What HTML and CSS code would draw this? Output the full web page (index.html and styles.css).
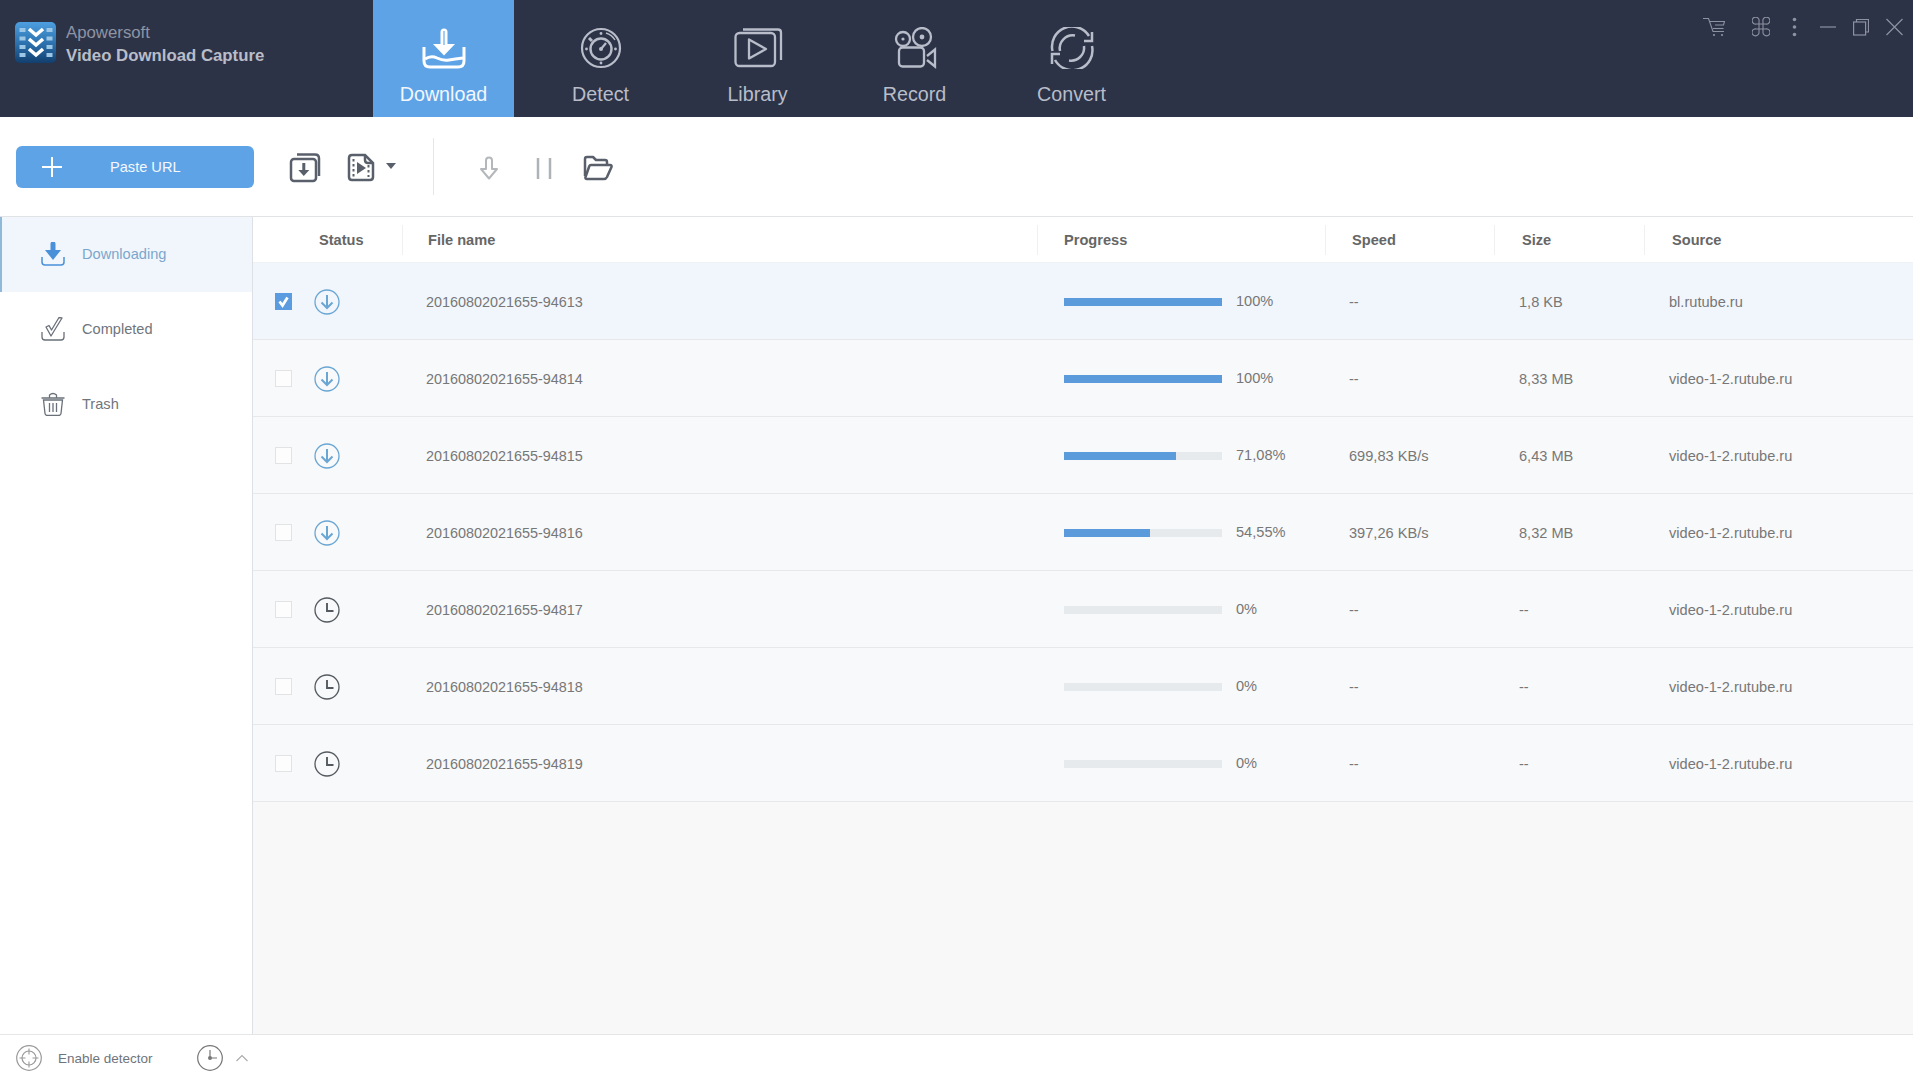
FILE: index.html
```html
<!DOCTYPE html>
<html lang="en">
<head>
<meta charset="utf-8">
<title>Apowersoft Video Download Capture</title>
<link rel="stylesheet" href="styles.css">
</head>
<body>
<div class="app">
  <header class="topbar">
    <div class="brand">
      <svg class="logo" viewBox="0 0 41 41" width="41" height="41">
        <defs><linearGradient id="lg" x1="0" y1="0" x2="0" y2="1"><stop offset="0" stop-color="#4e9fe0"/><stop offset="0.55" stop-color="#2a6fab"/><stop offset="1" stop-color="#123f6e"/></linearGradient></defs>
        <rect width="41" height="41" rx="5" fill="url(#lg)"/>
        <g fill="#9cc6e6"><rect x="4.5" y="6" width="6" height="4"/><rect x="4.5" y="14.5" width="6" height="4"/><rect x="4.5" y="23" width="6" height="4"/><rect x="4.5" y="31" width="6" height="4"/><rect x="31.5" y="6" width="6" height="4"/><rect x="31.5" y="14.5" width="6" height="4"/><rect x="31.5" y="23" width="6" height="4"/><rect x="31.5" y="31" width="6" height="4"/></g>
        <g fill="none" stroke="#fff" stroke-width="3.6"><path d="M14 7l7 6 7-6"/><path d="M14 17l7 6 7-6"/><path d="M14 27l7 6 7-6"/></g>
      </svg>
      <div class="brand-text">
        <div class="brand-vendor">Apowersoft</div>
        <div class="brand-name">Video Download Capture</div>
      </div>
    </div>
    <nav class="tabs">
      <div class="tab tab-active">
        <svg class="tab-icon" viewBox="0 0 50 42" width="50" height="42">
          <g transform="translate(3 0)">
          <path d="M18.5 17V5a3.5 3.5 0 0 1 7 0v12h7.5L22 28.5 11 17z" fill="#fff"/>
          <path d="M22 4v14" stroke="#8fbfee" stroke-width="1.6" fill="none"/>
          <path d="M2 20v14q0 6 6 6h28q6 0 6-6V20" fill="none" stroke="#fff" stroke-width="3"/>
          <path d="M3 32q6-4 12-1t12 2 14-2" fill="none" stroke="#fff" stroke-width="3"/>
          </g>
        </svg>
        <span class="tab-label">Download</span>
      </div>
      <div class="tab">
        <svg class="tab-icon" viewBox="0 0 50 42" width="50" height="42" fill="none" stroke="#b8bdc9">
          <circle cx="25" cy="21" r="19" stroke-width="2.2"/>
          <circle cx="25" cy="22" r="10.5" stroke-width="2.4"/>
          <path d="M25 22l5-6" stroke-width="2.2"/>
          <circle cx="25" cy="22" r="2" fill="#b8bdc9" stroke="none"/>
          <path d="M13 11l3 3" stroke-width="3"/>
          <path d="M30 6a16 16 0 0 1 9 7" stroke-width="1.4"/>
          <g fill="#b8bdc9" stroke="none"><circle cx="25" cy="6.5" r="1.4"/><circle cx="25" cy="36" r="1.4"/><circle cx="10.5" cy="22" r="1.4"/><circle cx="39.5" cy="22" r="1.4"/></g>
        </svg>
        <span class="tab-label">Detect</span>
      </div>
      <div class="tab">
        <svg class="tab-icon" viewBox="1 0 50 42" width="50" height="42" fill="none" stroke="#b8bdc9" stroke-width="2.3">
          <rect x="3.5" y="6" width="39.5" height="33" rx="4"/>
          <path d="M11 2.5h35q3 0 3 3V33"/>
          <path d="M17 12.5l17 9.5-17 9.500z" stroke-linejoin="round"/>
        </svg>
        <span class="tab-label">Library</span>
      </div>
      <div class="tab">
        <svg class="tab-icon" viewBox="0 0 50 42" width="50" height="42" fill="none" stroke="#b8bdc9" stroke-width="2.3">
          <circle cx="13" cy="12" r="7"/>
          <circle cx="32" cy="10" r="9"/>
          <circle cx="13" cy="12" r="1.6" fill="#b8bdc9" stroke="none"/>
          <circle cx="32" cy="10" r="2.4" fill="#b8bdc9" stroke="none"/>
          <rect x="9" y="20.5" width="25" height="19" rx="3.5"/>
          <path d="M37 29l8-6.500v17L37 33"/>
        </svg>
        <span class="tab-label">Record</span>
      </div>
      <div class="tab">
        <svg class="tab-icon" viewBox="0 0 50 42" width="50" height="42" fill="none" stroke="#b8bdc9" stroke-width="2.5">
          <path d="M5.5 24A20 20 0 0 1 42 9"/>
          <path d="M45 19A20 20 0 0 1 8 33"/>
          <path d="M45 5v9h-8"/>
          <path d="M5 37V27h8"/>
          <path d="M13 24A13 13 0 0 1 28 8.500"/>
          <path d="M37 19A13 13 0 0 1 22 33.500"/>
        </svg>
        <span class="tab-label">Convert</span>
      </div>
    </nav>
    <div class="controls">
      <svg viewBox="0 0 22 20" width="22" height="20" fill="none" stroke="#8d92a0" stroke-width="1.100"><path d="M0 1.500h5.500L10 14.500h11"/><path d="M7 4.500h14.500l-1 3.500H12"/><path d="M10 11.500h10.500"/><circle cx="11" cy="18" r="1.100" fill="#8d92a0" stroke="none"/><circle cx="19" cy="18" r="1.100" fill="#8d92a0" stroke="none"/></svg>
      <svg class="ctl-grid" viewBox="0 0 18 20" width="18" height="20" fill="none" stroke="#8d92a0" stroke-width="1.100"><path d="M7 7H4.500a3.500 3.500 0 1 1 2.500-2.500zM11 7h2.500A3.500 3.500 0 1 0 11 4.500zM7 12H4.500A3.500 3.500 0 1 0 7 15zM11 12h2.500A3.500 3.500 0 1 1 11 15zM7 7h4v5H7z"/></svg>
      <svg class="ctl-dots" viewBox="0 0 5 20" width="5" height="20" fill="#8d92a0"><circle cx="2.500" cy="2.500" r="1.800"/><circle cx="2.500" cy="10" r="1.800"/><circle cx="2.500" cy="17.500" r="1.800"/></svg>
      <svg class="ctl-min" viewBox="0 0 16 20" width="16" height="20" stroke="#8d92a0" stroke-width="1.200"><path d="M0 10h16"/></svg>
      <svg class="ctl-win" viewBox="0 0 16 20" width="16" height="20" fill="none" stroke="#8d92a0" stroke-width="1.200"><rect x="0.600" y="5" width="12" height="13"/><path d="M3.500 5V2.500h12V15h-3"/></svg>
      <svg class="ctl-win" viewBox="0 0 17 20" width="17" height="20" stroke="#8d92a0" stroke-width="1.200"><path d="M0.500 2l16 16M16.500 2l-16 16"/></svg>
    </div>
  </header>

  <section class="toolbar">
    <button class="paste"><svg viewBox="0 0 20 20" width="20" height="20" stroke="#fff" stroke-width="2"><path d="M10 0v20M0 10h20"/></svg><span class="paste-label">Paste URL</span></button>
    <svg class="t-import" viewBox="0 0 32 30" width="32" height="30" fill="none" stroke="#59606b" stroke-width="2.500"><rect x="2" y="6" width="25" height="22" rx="3"/><path d="M8 1.500h18q4 0 4 4V23"/><path d="M13.300 10v7h-4l5.500 6 5.500-6h-4v-7z" fill="#59606b" stroke="none"/></svg>
    <svg class="t-video" viewBox="0 0 28 29" width="28" height="29" fill="none" stroke="#59606b" stroke-width="2.500"><path d="M5 2h13l8 8v14q0 3-3 3H5q-3 0-3-3V5q0-3 3-3z"/><path d="M18 2v5q0 3 3 3h5"/><path d="M6.500 6v18M21.500 12v12" stroke-width="2" stroke-dasharray="2.500 2.500"/><path d="M10 9l9 6-9 6z" fill="#59606b" stroke="none"/></svg>
    <svg class="t-caret" viewBox="0 0 10 6" width="10" height="6"><path d="M0 0h10L5 6z" fill="#59606b"/></svg>
    <div class="t-divider"></div>
    <svg class="t-arrow" viewBox="0 0 20 24" width="20" height="24" fill="none" stroke="#b5b8bb" stroke-width="2"><path d="M7 13V4.500a3 3 0 0 1 6 0V13h5L10 22.500 2 13z" stroke-linejoin="round"/></svg>
    <svg class="t-pause" viewBox="0 0 16 24" width="16" height="24" stroke="#b0b3b6" stroke-width="2.500"><path d="M2 2v21M14 2v21"/></svg>
    <svg class="t-folder" viewBox="0 0 31 26" width="31" height="26" fill="none" stroke="#59606b" stroke-width="2.500" stroke-linejoin="round"><path d="M3 21V4q0-2 2-2h6l3 3h9q2 0 2 2v3"/><path d="M9 10h19q2 0 1.500 2L25 22q-1 2-3 2H5q-2 0-1.500-2L7 12q.5-2 2-2z"/></svg>
  </section>

  <main class="content">
    <aside class="sidebar">
      <div class="side-item side-active">
        <svg viewBox="0 0 24 24" width="24" height="24" fill="none" stroke="#4a90d9"><path d="M1 15v5q0 3 3 3h16q3 0 3-3v-5" stroke-width="1.500"/><path d="M9.500 8V2a2.500 2.500 0 0 1 5 0v6h5.500L12 18 4 8z" fill="#4a90d9" stroke="none"/></svg>
        <span>Downloading</span>
      </div>
      <div class="side-item">
        <svg viewBox="0 0 24 24" width="24" height="24" fill="none" stroke="#6a7079" stroke-width="1.300"><path d="M1 15v5q0 3 3 3h16q3 0 3-3v-5"/><path d="M5 10l5 9L21 1l-3-.5L10.500 13 8 8.500z" stroke-linejoin="round"/></svg>
        <span>Completed</span>
      </div>
      <div class="side-item">
        <svg viewBox="0 0 24 24" width="24" height="24" fill="none" stroke="#6a7079" stroke-width="1.300"><path d="M0.500 6h23M8.500 6V3q3.500-3 7 0v3"/><path d="M2.500 8l1.500 13.500q.3 2 2.500 2h11q2.200 0 2.500-2L21.500 8z"/><path d="M8.500 11v9M12 11v9M15.500 11v9"/></svg>
        <span>Trash</span>
      </div>
    </aside>
    <div class="table">
      <div class="thead">
        <div class="th th-status">Status</div>
        <div class="th th-file">File name</div>
        <div class="th th-progress">Progress</div>
        <div class="th th-speed">Speed</div>
        <div class="th th-size">Size</div>
        <div class="th th-source">Source</div>
      </div>

      <div class="row row-selected">
        <div class="cell-check"><span class="check check-on"><svg viewBox="0 0 17 17" width="17" height="17" fill="none" stroke="#fff" stroke-width="2.800"><path d="M4.500 8.500l3 4 5-8"/></svg></span></div>
        <div><svg class="st" viewBox="0 0 26 26" width="26" height="26" fill="none" stroke="#6aa6d4"><circle cx="13" cy="13" r="12" stroke-width="1.300"/><path d="M13 6v13M7.500 13.500L13 19l5.500-5.500" stroke-width="2"/></svg></div>
        <div class="name">20160802021655-94613</div>
        <div class="progress"><div class="bar"><div class="fill" style="width:100%"></div></div><span class="pct">100%</span></div>
        <div>--</div><div>1,8 KB</div><div>bl.rutube.ru</div>
      </div>
      <div class="row">
        <div class="cell-check"><span class="check"></span></div>
        <div><svg class="st" viewBox="0 0 26 26" width="26" height="26" fill="none" stroke="#6aa6d4"><circle cx="13" cy="13" r="12" stroke-width="1.300"/><path d="M13 6v13M7.500 13.500L13 19l5.500-5.500" stroke-width="2"/></svg></div>
        <div class="name">20160802021655-94814</div>
        <div class="progress"><div class="bar"><div class="fill" style="width:100%"></div></div><span class="pct">100%</span></div>
        <div>--</div><div>8,33 MB</div><div>video-1-2.rutube.ru</div>
      </div>
      <div class="row">
        <div class="cell-check"><span class="check"></span></div>
        <div><svg class="st" viewBox="0 0 26 26" width="26" height="26" fill="none" stroke="#6aa6d4"><circle cx="13" cy="13" r="12" stroke-width="1.300"/><path d="M13 6v13M7.500 13.500L13 19l5.500-5.500" stroke-width="2"/></svg></div>
        <div class="name">20160802021655-94815</div>
        <div class="progress"><div class="bar"><div class="fill" style="width:71.08%"></div></div><span class="pct">71,08%</span></div>
        <div>699,83 KB/s</div><div>6,43 MB</div><div>video-1-2.rutube.ru</div>
      </div>
      <div class="row">
        <div class="cell-check"><span class="check"></span></div>
        <div><svg class="st" viewBox="0 0 26 26" width="26" height="26" fill="none" stroke="#6aa6d4"><circle cx="13" cy="13" r="12" stroke-width="1.300"/><path d="M13 6v13M7.500 13.500L13 19l5.500-5.500" stroke-width="2"/></svg></div>
        <div class="name">20160802021655-94816</div>
        <div class="progress"><div class="bar"><div class="fill" style="width:54.55%"></div></div><span class="pct">54,55%</span></div>
        <div>397,26 KB/s</div><div>8,32 MB</div><div>video-1-2.rutube.ru</div>
      </div>
      <div class="row">
        <div class="cell-check"><span class="check"></span></div>
        <div><svg class="st" viewBox="0 0 26 26" width="26" height="26" fill="none" stroke="#555a60"><circle cx="13" cy="13" r="12" stroke-width="1.300"/><path d="M13 6v8h6.500" stroke-width="1.900"/></svg></div>
        <div class="name">20160802021655-94817</div>
        <div class="progress"><div class="bar"><div class="fill" style="width:0%"></div></div><span class="pct">0%</span></div>
        <div>--</div><div>--</div><div>video-1-2.rutube.ru</div>
      </div>
      <div class="row">
        <div class="cell-check"><span class="check"></span></div>
        <div><svg class="st" viewBox="0 0 26 26" width="26" height="26" fill="none" stroke="#555a60"><circle cx="13" cy="13" r="12" stroke-width="1.300"/><path d="M13 6v8h6.500" stroke-width="1.900"/></svg></div>
        <div class="name">20160802021655-94818</div>
        <div class="progress"><div class="bar"><div class="fill" style="width:0%"></div></div><span class="pct">0%</span></div>
        <div>--</div><div>--</div><div>video-1-2.rutube.ru</div>
      </div>
      <div class="row">
        <div class="cell-check"><span class="check"></span></div>
        <div><svg class="st" viewBox="0 0 26 26" width="26" height="26" fill="none" stroke="#555a60"><circle cx="13" cy="13" r="12" stroke-width="1.300"/><path d="M13 6v8h6.500" stroke-width="1.900"/></svg></div>
        <div class="name">20160802021655-94819</div>
        <div class="progress"><div class="bar"><div class="fill" style="width:0%"></div></div><span class="pct">0%</span></div>
        <div>--</div><div>--</div><div>video-1-2.rutube.ru</div>
      </div>
    </div>
  </main>

  <footer class="footer">
    <svg viewBox="0 0 26 26" width="26" height="26" fill="none" stroke="#999"><circle cx="13" cy="13" r="12.300" stroke-width="1.200"/><circle cx="13" cy="13" r="7" stroke-width="1.200"/><path d="M13 3.500v6M13 16.500v6M3.500 13h6M16.500 13h6" stroke-width="1.100"/></svg>
    <span class="foot-label">Enable detector</span>
    <svg class="foot-clock" viewBox="0 0 26 26" width="26" height="26" fill="none" stroke="#777"><circle cx="13" cy="13" r="12.300" stroke-width="1.200"/><path d="M13 5v8h7" stroke-width="1.200"/><circle cx="13" cy="13" r="2" fill="#777" stroke="none"/></svg>
    <svg class="foot-chev" viewBox="0 0 14 8" width="14" height="8" fill="none" stroke="#aaa" stroke-width="1.100"><path d="M1.500 7L7 1.500 12.500 7"/></svg>
  </footer>
</div>
</body>
</html>
```
FILE: styles.css
```css
* { box-sizing: border-box; }
html, body { margin: 0; padding: 0; height: 100%; }
body { font-family: "Liberation Sans", Arial, sans-serif; background: #fff; overflow: hidden; }
svg { display: block; flex: none; }

.app { display: flex; flex-direction: column; width: 100%; height: 1079px; }

/* top bar */
.topbar { display: flex; height: 117px; flex: none; background: #2c3347; }
.brand { display: flex; align-items: flex-start; width: 373px; padding: 21px 0 0 15px; }
.logo { margin-top: 1px; }
.brand-text { margin-left: 10px; font-size: 16.8px; line-height: 23px; }
.brand-vendor { color: #8e94a4; }
.brand-name { color: #b9bdc9; font-weight: 700; }

.tabs { display: flex; gap: 16px; }
.tab { display: flex; flex-direction: column; align-items: center; width: 141px; padding-top: 27px; color: #b8bdc9; }
.tab-active { background: #5fa3e7; color: #f2f7fd; }
.tab-label { margin-top: 14px; font-size: 19.7px; line-height: 22px; }

.controls { display: flex; align-items: flex-start; margin-left: auto; padding: 17px 10px 0 0; }
.ctl-grid { margin-left: 27px; }
.ctl-dots { margin-left: 22px; }
.ctl-min { margin-left: 23px; }
.ctl-win { margin-left: 17px; }

/* tool bar */
.toolbar { display: flex; align-items: center; height: 100px; flex: none; padding-left: 16px; border-bottom: 1px solid #e2e3e5; }
.paste { display: flex; align-items: center; width: 238px; height: 42px; padding: 0 0 0 26px; border: 0; border-radius: 6px; background: #5fa3e7; color: #f4f8fd; font: 14.6px "Liberation Sans", Arial, sans-serif; }
.paste-label { margin-left: 48px; }
.t-import { margin: 2px 0 0 35px; }
.t-video { margin: 2px 0 0 26px; }
.t-caret { margin: -2px 0 0 11px; }
.t-divider { width: 1px; height: 57px; margin-left: 37px; background: #e6e6e6; }
.t-arrow { margin: 2px 0 0 45px; }
.t-pause { margin: 2px 0 0 37px; }
.t-folder { margin: 2px 0 0 30px; }

/* main */
.content { display: flex; flex: 1; min-height: 0; }
.sidebar { width: 253px; flex: none; background: #fff; border-right: 1px solid #dde1e5; }
.side-item { display: flex; align-items: center; gap: 17px; height: 75px; padding: 0 0 2px 41px; font-size: 14.6px; color: #70757c; }
.side-active { border-left: 2px solid #8fb8d9; padding-left: 39px; background: #f1f6fc; color: #7ba6cc; }

.table { flex: 1; background: #f8f8f8; font-size: 14.6px; color: #777; }
.thead { display: grid; grid-template-columns: 149px 635px 288px 169px 150px 1fr; align-items: center; height: 46px; background: #fff; border-bottom: 1px solid #eff1f3; }
.th { display: flex; align-items: center; height: 30px; font-weight: 700; color: #666; border-left: 1px solid #f0f0f0; padding-left: 26px; }
.th-status { padding-left: 66px; border-left: 0; }
.th-file { padding-left: 25px; }
.th-size, .th-source { padding-left: 27px; }

.row { display: grid; grid-template-columns: 61px 112px 638px 285px 170px 150px 1fr; align-items: center; height: 77px; padding-top: 1px; background: #f8f9fa; border-bottom: 1px solid #e6e8ea; }
.row-selected { background: #f1f6fc; }
.cell-check { padding-left: 22px; }
.check { display: block; width: 17px; height: 17px; border: 1px solid #e2e3e5; background: #fdfdfd; }
.check-on { border: 0; background: #5b9bdf; }
.name { font-size: 14.4px; }

.progress { display: flex; align-items: center; }
.bar { width: 158px; height: 8px; background: #e7eaed; }
.fill { height: 100%; background: #5b9bdc; }
.pct { margin: 0 0 2px 14px; }

/* footer */
.footer { display: flex; align-items: center; height: 45px; flex: none; padding: 2px 0 0 16px; border-top: 1px solid #e4e6e8; background: #fff; }
.foot-label { margin-left: 16px; font-size: 13.5px; color: #6f747b; }
.foot-clock { margin-left: 44px; }
.foot-chev { margin-left: 12px; }
```
